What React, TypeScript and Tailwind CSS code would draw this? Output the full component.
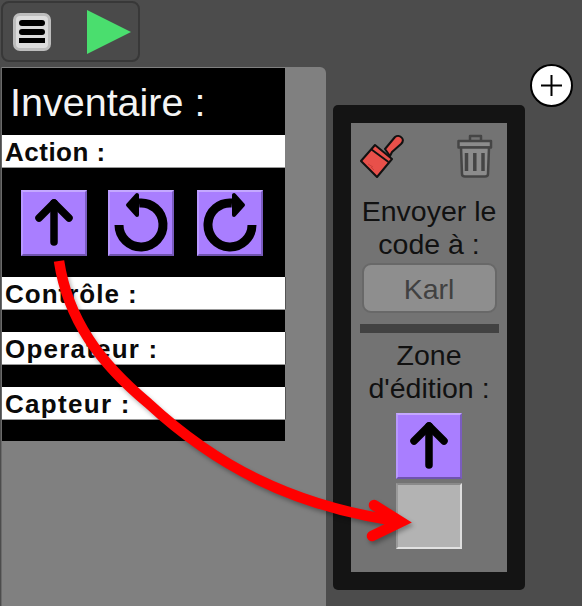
const font = { fontFamily: '"Liberation Sans", Arial, sans-serif' };

function Tile({ children, className = "" }: { children?: React.ReactNode; className?: string }) {
  return (
    <div className={`flex h-[66px] w-[66px] items-center justify-center border-2 border-t-[#c4a8ff] border-l-[#b898ff] border-r-[#7a5cc0] border-b-[#6f54ad] bg-[#a97eff] ${className}`}>
      {children}
    </div>
  );
}

function UpArrow() {
  return (
    <svg width="40" height="48" viewBox="0 0 40 48" fill="none" stroke="#000" strokeWidth="7.5" strokeLinecap="round" strokeLinejoin="round">
      <path d="M20 4V43" />
      <path d="M5 19L20 4L35 19" />
    </svg>
  );
}

function RotateLeft() {
  return (
    <svg width="60" height="62" viewBox="0 0 60 62" fill="none">
      <path d="M28 11A22 22 0 1 1 8 33" stroke="#000" strokeWidth="9" />
      <path d="M17 13L26 3V23Z" fill="#000" stroke="#000" strokeWidth="4" strokeLinejoin="round" />
    </svg>
  );
}

function RotateRight() {
  return (
    <svg width="60" height="62" viewBox="0 0 60 62" fill="none">
      <path d="M32 11A22 22 0 1 0 52 33" stroke="#000" strokeWidth="9" />
      <path d="M43 13L34 3V23Z" fill="#000" stroke="#000" strokeWidth="4" strokeLinejoin="round" />
    </svg>
  );
}

function Row({ label, className = "" }: { label: string; className?: string }) {
  return (
    <div className={`flex h-[33px] items-center border-b border-[#999] bg-white pl-[3px] pt-[2px] text-[26px] font-bold text-[#0a0a0a] ${className}`}>
      {label}
    </div>
  );
}

export default function App() {
  return (
    <div style={font} className="relative flex h-[606px] w-[582px] flex-col overflow-hidden bg-[#4c4c4c]">
      <div className="ml-px mt-px flex h-[61px] w-[139px] items-center rounded-[8px] border-2 border-[#383838] bg-[#4a4a4a] pl-[10px]">
        <div className="flex h-[38px] w-[38px] flex-col items-center justify-center gap-[3px] rounded-[7px] border-[3px] border-[#bdbdbd] bg-[#dcdcdc]">
          <div className="h-[6px] w-[26px] rounded-[3px] bg-black" />
          <div className="h-[6px] w-[26px] rounded-[3px] bg-black" />
          <div className="h-[5px] w-[26px] bg-black" />
        </div>
        <svg className="ml-[35px]" width="46" height="46" viewBox="0 0 46 46">
          <path d="M1 1L45 23L1 45Z" fill="#4ade6e" />
        </svg>
      </div>

      <div className="mt-[5px] flex flex-1">
        <div className="ml-px w-[325px] rounded-tr-[6px] border-l border-[#6a6a6a] bg-[#808080] pt-px">
          <div className="w-[283px] bg-black pb-[21px]">
            <div className="flex h-[67px] items-center pl-[8px] pt-[2px] text-[39.5px] text-[#f4f4f4]">Inventaire :</div>
            <Row label="Action :" className="tracking-[0.5px]" />
            <div className="mt-[22px] flex pl-[19px]">
              <Tile><UpArrow /></Tile>
              <Tile className="ml-[21px]"><RotateLeft /></Tile>
              <Tile className="ml-[23px]"><RotateRight /></Tile>
            </div>
            <Row label="Contrôle :" className="mt-[21px] w-[284px] border-r border-r-[#555] tracking-[1px]" />
            <Row label="Operateur :" className="mt-[22px] w-[284px] border-r border-r-[#555] tracking-[1.2px]" />
            <Row label="Capteur :" className="mt-[22px] w-[284px] border-r border-r-[#555] tracking-[1.3px]" />
          </div>
        </div>

        <div className="ml-[7px] mt-[38px] mb-[16px] w-[192px] rounded-[5px] bg-[#141414] p-[18px]">
          <div className="flex h-full flex-col items-center bg-[#737373] text-[#111]">
            <div className="flex h-[72px] w-full items-start justify-between pl-[9px] pr-[14px] pt-[11px]">
              <svg width="44" height="44" viewBox="0 0 44 44">
                <path d="M25 15L35 3C37 1.500 40 1.500 42 4C43.500 6 43 8 41 10L32 18L30 22Z" fill="#e8504a" stroke="#111" strokeWidth="2" strokeLinejoin="round" />
                <path d="M1 27L15 11L32 25L17 43Z" fill="#e8504a" stroke="#111" strokeWidth="2" strokeLinejoin="round" />
                <path d="M11.500 15.500L28.500 28" stroke="#111" strokeWidth="2" />
                <path d="M8 30L13 33M14 36L11 33" stroke="#c93f3a" strokeWidth="1" />
              </svg>
              <svg width="36" height="44" viewBox="0 0 36 44" fill="none" stroke="#454545" strokeWidth="2.500" strokeLinejoin="round">
                <path d="M13 6V2H24V6" />
                <path d="M1.500 7H34V13.500H1.500Z" fill="#8c8c8c" />
                <path d="M4 13.500L5 40Q5 42.500 8 42.500H28Q31 42.500 31 40L32 13.500Z" fill="#8c8c8c" />
                <path d="M9.500 19V37M17.800 19V37M26 19V37" strokeWidth="3.500" />
              </svg>
            </div>
            <div className="text-center text-[28.5px] leading-[33px]">Envoyer le<br />code à :</div>
            <div className="mt-[2px] flex h-[50px] w-[135px] items-center justify-center rounded-[9px] border-2 border-[#686868] bg-[#8e8e8e] pt-[3px] text-[28.5px] text-[#414141]">Karl</div>
            <div className="mt-[11px] h-[9px] w-[139px] bg-[#424242]" />
            <div className="mt-[6px] text-center text-[28.5px] leading-[33px]">Zone<br />d'édition :</div>
            <Tile className="mt-[8px]"><UpArrow /></Tile>
            <div className="mt-[4px] h-[66px] w-[66px] border-2 border-t-[#8a8a8a] border-l-[#9a9a9a] border-r-[#dedede] border-b-[#e2e2e2] bg-[#b3b3b3]" />
          </div>
        </div>
      </div>

      <div className="absolute left-[530px] top-[64px] flex h-[43px] w-[43px] items-center justify-center rounded-full border-2 border-black bg-white">
        <svg width="21" height="21" viewBox="0 0 21 21" stroke="#000" strokeWidth="2"><path d="M0 10.500H21M10.500 0V21" /></svg>
      </div>

      <svg className="absolute left-0 top-0" width="582" height="606" viewBox="0 0 582 606" fill="none" stroke="#ff0000" strokeWidth="10.500" style={{ filter: "drop-shadow(2px 3px 2px rgba(0,0,0,0.3))" }}>
        <path d="M59 261C68 320 100 363 148 403C215 465 290 505 396 521" />
        <path d="M374 505L401 522L372 536" strokeLinecap="round" strokeLinejoin="miter" />
      </svg>
    </div>
  );
}
